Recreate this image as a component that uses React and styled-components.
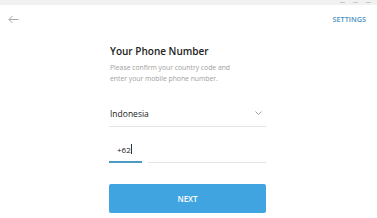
import React from "react";
import styled, { createGlobalStyle } from "styled-components";

const Global = createGlobalStyle`
  html, body { margin: 0; padding: 0; background: #fff; }
  body { font-family: "Open Sans", "Noto Sans", sans-serif; width: 377px; height: 218px; overflow: hidden; }
`;

const Window = styled.div`
  width: 377px;
  height: 218px;
  display: flex;
  flex-direction: column;
  background: #fff;
`;

const TitleBar = styled.div`
  height: 5px;
  background: #f1f1f1;
  display: flex;
  justify-content: flex-end;
  align-items: flex-start;
  gap: 8px;
  padding-right: 6px;
`;

const Ctrl = styled.span`
  width: 5px;
  height: 3px;
  border-bottom: 1px solid #c8c8c8;
  box-sizing: border-box;
`;

const TopRow = styled.div`
  height: 28px;
  display: flex;
  align-items: center;
  justify-content: space-between;
  padding: 0 11px 0 8px;
`;

const Settings = styled.span`
  font-size: 7.3px;
  font-weight: 600;
  color: #4c93c0;
`;

const Form = styled.div`
  width: 157px;
  margin: 11px 0 0 109px;
  display: flex;
  flex-direction: column;
`;

const Title = styled.div`
  font-size: 10px;
  font-weight: 600;
  color: #222;
  line-height: 14px;
  padding-left: 1px;
`;

const Sub = styled.div`
  margin-top: 5px;
  font-size: 6.8px;
  color: #a0a0a0;
  line-height: 10.5px;
  padding-left: 1px;
`;

const Field = styled.div`
  margin-top: ${(p) => p.$mt}px;
  display: flex;
  align-items: center;
  justify-content: space-between;
  height: 26px;
  border-bottom: 1px solid #e4e4e4;
  font-size: 8.5px;
  color: #222;
  padding: 0 4px 0 1px;
`;

const PhoneRow = styled.div`
  margin-top: 10px;
  display: flex;
  gap: 6px;
  height: 26px;
`;

const Code = styled.div`
  width: 33px;
  border-bottom: 2px solid #4a9ac4;
  font-size: 8px;
  color: #222;
  display: flex;
  align-items: center;
  padding-left: 8px;
  box-sizing: border-box;
`;

const Caret = styled.span`
  width: 1px;
  height: 10px;
  background: #333;
  margin-left: 0.5px;
`;

const Number = styled.div`
  flex: 1;
  border-bottom: 1px solid #e4e4e4;
`;

const Button = styled.div`
  margin-top: 21px;
  height: 29px;
  background: #40a4e1;
  border-radius: 2px;
  color: #fff;
  font-size: 8px;
  font-weight: 600;
  display: flex;
  align-items: center;
  justify-content: center;
`;

export default function App() {
  return (
    <>
      <Global />
      <Window>
        <TitleBar>
          <Ctrl />
          <Ctrl />
          <Ctrl />
        </TitleBar>
        <TopRow>
          <svg width="11" height="9" viewBox="0 0 11 9">
            <path d="M10.5 4.5H1 M4.5 1L1 4.5L4.5 8" stroke="#a8a8a8" strokeWidth="1" fill="none" />
          </svg>
          <Settings>SETTINGS</Settings>
        </TopRow>
        <Form>
          <Title>Your Phone Number</Title>
          <Sub>
            Please confirm your country code and
            <br />
            enter your mobile phone number.
          </Sub>
          <Field $mt={16}>
            <span>Indonesia</span>
            <svg width="7" height="4" viewBox="0 0 7 4">
              <path d="M0.5 0.5L3.5 3.5L6.5 0.5" stroke="#a0a0a0" strokeWidth="1" fill="none" />
            </svg>
          </Field>
          <PhoneRow>
            <Code>
              +62
              <Caret />
            </Code>
            <Number />
          </PhoneRow>
          <Button>NEXT</Button>
        </Form>
      </Window>
    </>
  );
}
